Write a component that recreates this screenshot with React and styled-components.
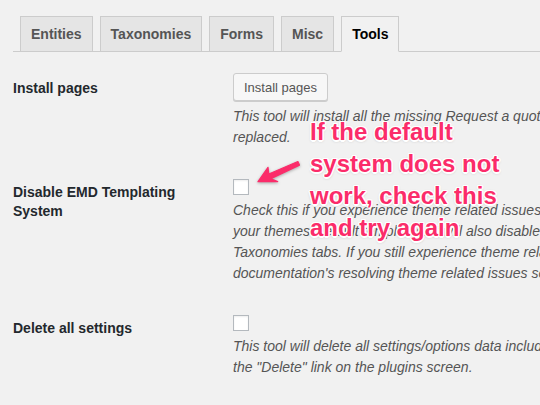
import React from 'react';
import styled, { createGlobalStyle } from 'styled-components';

const GlobalStyle = createGlobalStyle`
  html, body {
    margin: 0;
    padding: 0;
    background: #f1f1f1;
    overflow: hidden;
  }
  body {
    font-family: "Liberation Sans", Arial, sans-serif;
    color: #23282d;
  }
`;

const tabs = ["Entities", "Taxonomies", "Forms", "Misc", "Tools"];

const rows = [
  {
    label: ["Install pages"],
    control: "button",
    desc: [
      "This tool will install all the missing Request a quote pages. Pages already defined and set up won't be",
      "replaced.",
    ],
  },
  {
    label: ["Disable EMD Templating", "System"],
    control: "checkbox",
    desc: [
      "Check this if you experience theme related issues. This option will disable EMD templating system and use",
      "your themes' default templates. It will also disable the display options in Entities and",
      "Taxonomies tabs. If you still experience theme related issues, please check out",
      "documentation's resolving theme related issues section.",
    ],
  },
  {
    label: ["Delete all settings"],
    control: "checkbox",
    desc: [
      "This tool will delete all settings/options data including entities and taxonomies when you click",
      "the \"Delete\" link on the plugins screen.",
    ],
  },
];

const annotation = ["If the default", "system does not", "work, check this", "and try again"];

export default function App() {
  return (
    <Page>
      <GlobalStyle />
      <TabBar>
        {tabs.map((t) => (
          <Tab key={t} $active={t === "Tools"}>{t}</Tab>
        ))}
      </TabBar>

      <Form>
        {rows.map((r, i) => (
          <Row key={i}>
            <Label $pad={r.control === "button" ? 5.5 : 3.5}>
              {r.label.map((l) => <div key={l}>{l}</div>)}
            </Label>
            <Field>
              {r.control === "button" ? (
                <Button>Install pages</Button>
              ) : (
                <Checkbox />
              )}
              <Description>
                {r.desc.map((d, j) => <Line key={j}>{d}</Line>)}
              </Description>
            </Field>
          </Row>
        ))}
      </Form>

      <Arrow viewBox="0 0 56 34" width="56" height="34">
        <polygon
          points="8,26.7 18,12.3 18.8,19 47.9,6.5 49.5,10.1 20.9,23.7 27.7,26.6"
          fill="#fb2c6a"
          stroke="#fb2c6a"
          strokeWidth="1.2"
          strokeLinejoin="round"
        />
      </Arrow>

      <Callout>
        {annotation.map((a) => <div key={a}>{a}</div>)}
      </Callout>
    </Page>
  );
}

const Page = styled.div`
  position: relative;
  width: 540px;
  height: 405px;
  overflow: hidden;
  padding-left: 13px;
  box-sizing: border-box;
`;

const TabBar = styled.div`
  display: flex;
  align-items: flex-end;
  padding-top: 16px;
  height: 35px;
  border-bottom: 1px solid #ccc;
  width: 600px;
`;

const Tab = styled.div`
  margin-left: 7px;
  margin-bottom: -1px;
  padding: 5px 10px;
  font-size: 14px;
  font-weight: bold;
  line-height: 24px;
  border: 1px solid #ccc;
  border-bottom-color: ${(p) => (p.$active ? "#f1f1f1" : "#ccc")};
  background: ${(p) => (p.$active ? "#f1f1f1" : "#e5e5e5")};
  color: ${(p) => (p.$active ? "#000" : "#555")};
  white-space: nowrap;
`;

const Form = styled.div`
  display: flex;
  flex-direction: column;
  gap: 31px;
  padding-top: 21px;
`;

const Row = styled.div`
  display: grid;
  grid-template-columns: 220px 1fr;
`;

const Label = styled.div`
  padding-top: ${(p) => p.$pad}px;
  font-size: 14px;
  font-weight: bold;
  line-height: 19px;
  color: #23282d;
`;

const Field = styled.div`
  display: flex;
  flex-direction: column;
  align-items: flex-start;
`;

const Button = styled.button`
  height: 28px;
  padding: 0 10px;
  font-family: "Liberation Sans", Arial, sans-serif;
  font-size: 13px;
  color: #555;
  background: #f7f7f7;
  border: 1px solid #ccc;
  border-radius: 3px;
  box-shadow: 0 1px 0 #ccc;
`;

const Checkbox = styled.span`
  display: block;
  width: 16px;
  height: 16px;
  box-sizing: border-box;
  background: #fff;
  border: 1px solid #b4b9be;
  box-shadow: inset 0 1px 2px rgba(0, 0, 0, 0.07);
`;

const Description = styled.div`
  margin-top: 5px;
  font-size: 14px;
  font-style: italic;
  line-height: 21px;
  color: #555;
`;

const Line = styled.div`
  white-space: nowrap;
`;

const Arrow = styled.svg`
  position: absolute;
  left: 250px;
  top: 155px;
  filter: drop-shadow(0 1px 1.5px rgba(0, 0, 0, 0.3));
`;

const Callout = styled.div`
  position: absolute;
  left: 310px;
  top: 116px;
  font-size: 24px;
  font-weight: bold;
  line-height: 32px;
  color: #fb2c6a;
  white-space: nowrap;
  text-shadow:
    1.5px 0 0 #fff, -1.5px 0 0 #fff, 0 1.5px 0 #fff, 0 -1.5px 0 #fff,
    1px 1px 0 #fff, -1px -1px 0 #fff, 1px -1px 0 #fff, -1px 1px 0 #fff,
    0 1px 3px rgba(0, 0, 0, 0.35);
`;
